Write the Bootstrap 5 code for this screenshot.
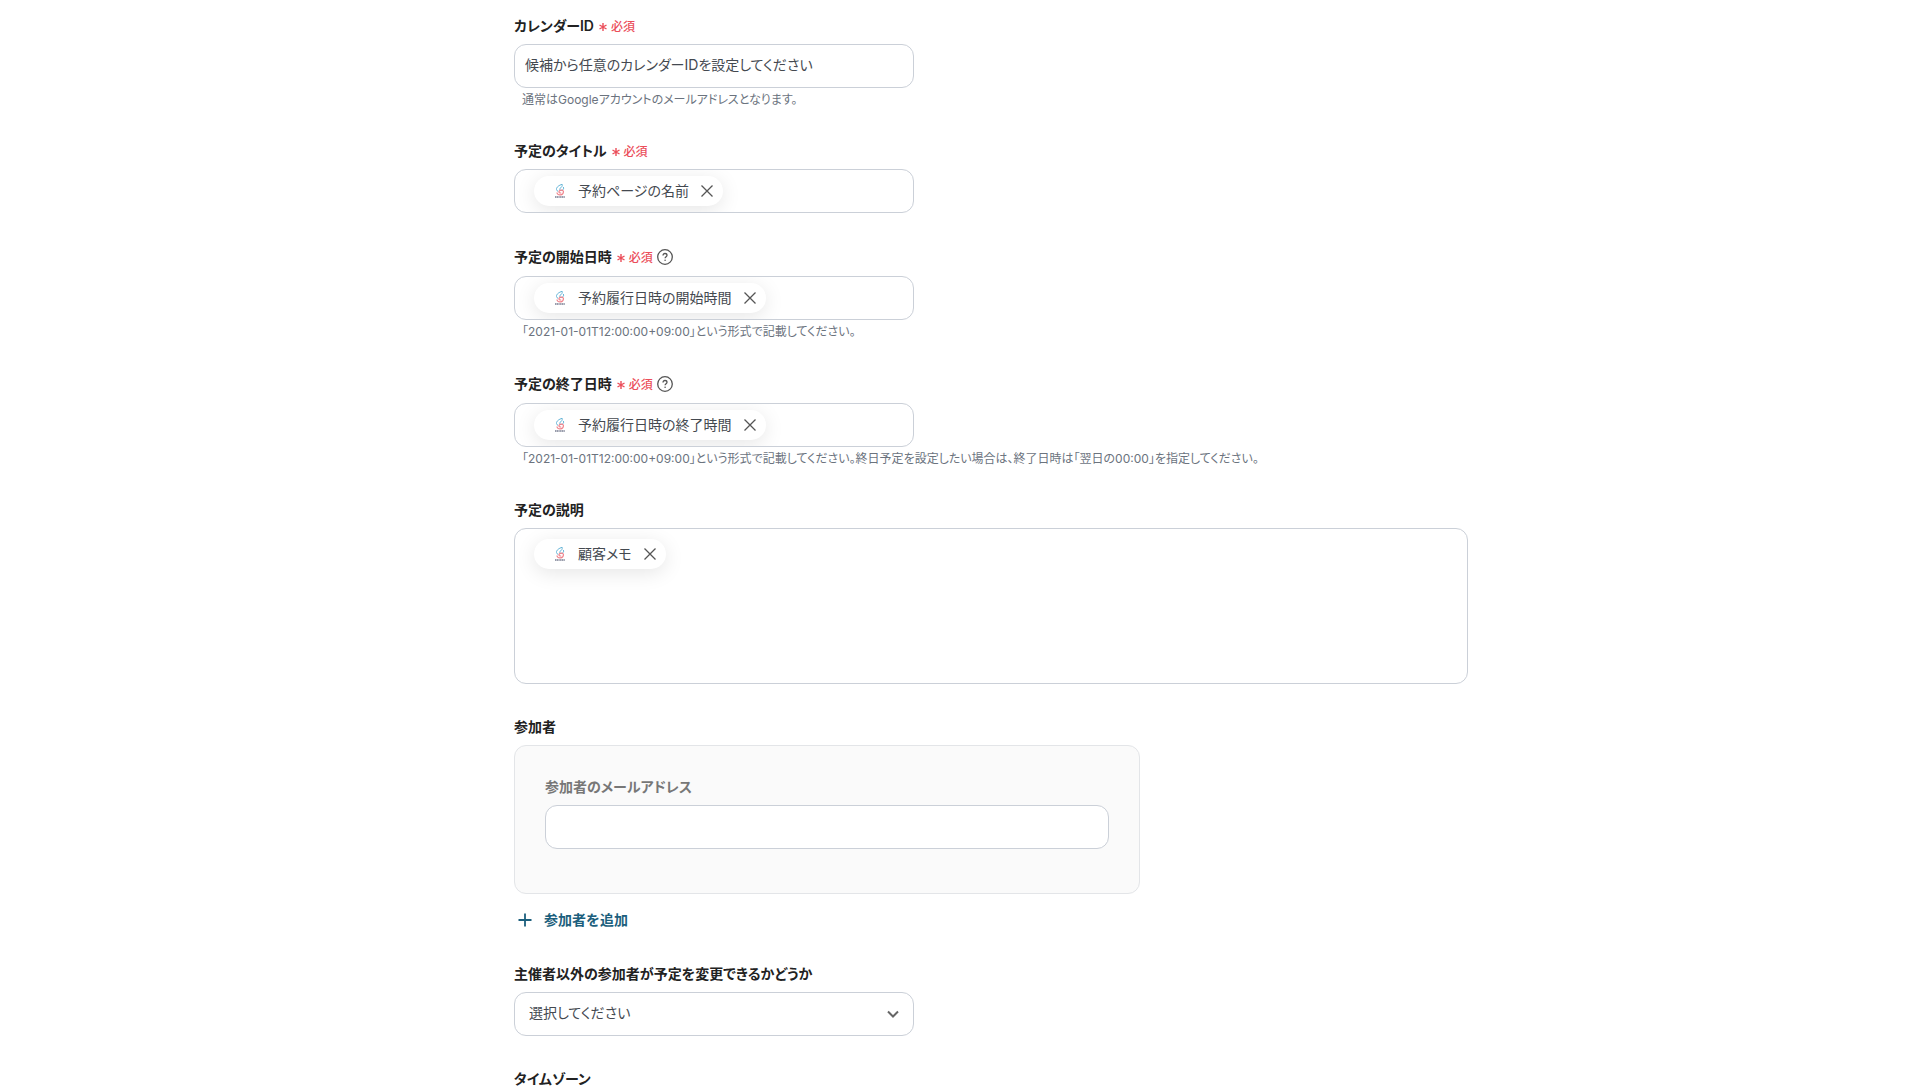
<!DOCTYPE html>
<html lang="ja">
<head>
<meta charset="utf-8">
<meta name="viewport" content="width=device-width, initial-scale=1">
<title>予定を作成</title>
<link href="https://cdn.jsdelivr.net/npm/bootstrap@5.3.0/dist/css/bootstrap.min.css" rel="stylesheet">
<style>
  body { font-family: Inter, "Noto Sans CJK JP", sans-serif; font-size: 14px; line-height: 24px; color: #222; background: #fff; font-feature-settings: "palt"; }
  .settings-form { max-width: 1016px; padding: 14px 0 0 62px; }
  .field-group { margin-bottom: 31px; }
  .field-label { font-weight: 600; margin-bottom: 6px; display: flex; align-items: center; }
  .field-label label, legend.field-label { font-size: 14px; line-height: 24px; }
  .with-help { min-height: 26px; }
  .required-mark { color: #eb4e5a; font-size: 12px; line-height: 22px; font-weight: 500; gap: 4px; margin-left: 5px; padding-top: 2px; }
  .help-btn { width: 16px; height: 16px; margin-left: 4px; color: #555; }
  .field-box { border: 1px solid #cbd0d8; border-radius: 12px; min-height: 44px; color: #444950; font-size: 14px; line-height: 24px; background-color: #fff; font-feature-settings: "palt"; }
  .field-medium { max-width: 400px; }
  input.field-box { padding: 8px 10px 10px; }
  select.field-box { padding: 8px 40px 10px 14px; background-image: url("data:image/svg+xml,%3Csvg xmlns='http://www.w3.org/2000/svg' viewBox='0 0 12 8'%3E%3Cpath d='M1 1.5l5 5 5-5' fill='none' stroke='%23666' stroke-width='2'/%3E%3C/svg%3E"); background-size: 12px 8px; background-position: right 14px center; }
  .chip-box { overflow: hidden; padding: 0 19px; }
  .memo-box { height: 156px; padding-top: 10px; }
  .chip { height: 30px; border-radius: 15px; background: #fff; box-shadow: 0 4px 20px rgba(0,0,0,.1); padding: 0 10px 0 21px; white-space: nowrap; }
  .chip-logo { width: 10px; height: 14px; margin-right: 13px; }
  .chip-close { width: 12px; height: 12px; margin-left: 12px; color: #555; }
  .chip-input { min-width: 0; outline: 0; resize: none; }
  .help-text { font-size: 12px; line-height: 16px; padding-top: 4px; padding-left: 8px; color: #6b737e; }
  .member-panel { max-width: 626px; border: 1px solid #e3e5e8; border-radius: 12px; background: #fafafa; padding: 29px 30px 44px; }
  .member-panel label { color: #777; font-weight: 600; margin-bottom: 6px; }
  .add-btn { margin-top: 14px; padding: 0 4px; font-size: 14px; line-height: 23px; font-weight: 600; color: #1c5f7d; gap: 12px; }
  .add-btn svg { width: 14px; height: 14px; }
</style>
</head>
<body>
<svg class="d-none" aria-hidden="true">
  <symbol id="asterisk" viewBox="0 0 8 8"><path d="M4 0v8M.5 2l7 4M7.500 2l-7 4" stroke="currentColor" stroke-width="1.400"/></symbol>
  <symbol id="question" viewBox="0 0 16 16"><g fill="none" stroke="currentColor" stroke-width="1.300"><circle cx="8" cy="8" r="7.300"/><path d="M6 6.600C6 5.200 6.900 4.500 8 4.500s2 .7 2 1.800c0 1.300-1.900 1.500-1.900 3"/></g><circle cx="8.100" cy="11.300" r=".8" fill="currentColor"/></symbol>
  <symbol id="cross" viewBox="0 0 12 12"><path d="M.5.5l11 11M11.500.5l-11 11" stroke="currentColor" stroke-width="1.300"/></symbol>
  <symbol id="brand" viewBox="0 0 10 14">
    <path d="M7.200.3C4 1.200 1.200 3.200 1.500 5.500c.1 1 .8 1.600 1.600 1.900M7.200.3C7.600 2.200 6.500 3.400 4.800 4.600M8.300 3c.7 1.400.2 2.500-.9 3.200-1.300.8-2.900.2-2.600-1.600" fill="none" stroke="#64b4d6" stroke-width="1"/>
    <path d="M2 8.500c0 1.600 1.500 2.600 3.300 2.400 2-.2 3.200-1.600 3.100-3.400C8.300 6.500 7.500 6 6.500 6.200 5 6.500 3.700 7 4 8.200c.2.900 1.500 1 2.200.5" fill="none" stroke="#f0828a" stroke-width="1.200"/>
    <path d="M0 13h10" stroke="#777c90" stroke-width="1.400" stroke-dasharray="1.300 .4"/>
  </symbol>
</svg>

<main class="settings-form mx-auto">
  <form>
    <div class="field-group">
      <div class="field-label">
        <label for="calendarId">カレンダーID</label>
        <span class="required-mark d-inline-flex align-items-center"><svg width="8" height="8"><use href="#asterisk"/></svg>必須</span>
      </div>
      <input id="calendarId" type="text" class="form-control field-box field-medium" value="候補から任意のカレンダーIDを設定してください">
      <div class="help-text">通常はGoogleアカウントのメールアドレスとなります。</div>
    </div>

    <div class="field-group">
      <div class="field-label">
        <label for="eventTitle">予定のタイトル</label>
        <span class="required-mark d-inline-flex align-items-center"><svg width="8" height="8"><use href="#asterisk"/></svg>必須</span>
      </div>
      <div class="field-box field-medium chip-box d-flex align-items-center">
        <span class="chip d-inline-flex align-items-center"><svg class="chip-logo"><use href="#brand"/></svg>予約ページの名前<button type="button" class="btn p-0 border-0 d-flex chip-close" aria-label="削除"><svg width="12" height="12"><use href="#cross"/></svg></button></span>
        <input id="eventTitle" type="text" class="chip-input flex-grow-1 border-0 bg-transparent p-0">
      </div>
    </div>

    <div class="field-group">
      <div class="field-label with-help">
        <label for="startAt">予定の開始日時</label>
        <span class="required-mark d-inline-flex align-items-center"><svg width="8" height="8"><use href="#asterisk"/></svg>必須</span>
        <button type="button" class="btn p-0 border-0 d-flex help-btn" aria-label="ヘルプ"><svg width="16" height="16"><use href="#question"/></svg></button>
      </div>
      <div class="field-box field-medium chip-box d-flex align-items-center">
        <span class="chip d-inline-flex align-items-center"><svg class="chip-logo"><use href="#brand"/></svg>予約履行日時の開始時間<button type="button" class="btn p-0 border-0 d-flex chip-close" aria-label="削除"><svg width="12" height="12"><use href="#cross"/></svg></button></span>
        <input id="startAt" type="text" class="chip-input flex-grow-1 border-0 bg-transparent p-0">
      </div>
      <div class="help-text">「2021-01-01T12:00:00+09:00」という形式で記載してください。</div>
    </div>

    <div class="field-group">
      <div class="field-label with-help">
        <label for="endAt">予定の終了日時</label>
        <span class="required-mark d-inline-flex align-items-center"><svg width="8" height="8"><use href="#asterisk"/></svg>必須</span>
        <button type="button" class="btn p-0 border-0 d-flex help-btn" aria-label="ヘルプ"><svg width="16" height="16"><use href="#question"/></svg></button>
      </div>
      <div class="field-box field-medium chip-box d-flex align-items-center">
        <span class="chip d-inline-flex align-items-center"><svg class="chip-logo"><use href="#brand"/></svg>予約履行日時の終了時間<button type="button" class="btn p-0 border-0 d-flex chip-close" aria-label="削除"><svg width="12" height="12"><use href="#cross"/></svg></button></span>
        <input id="endAt" type="text" class="chip-input flex-grow-1 border-0 bg-transparent p-0">
      </div>
      <div class="help-text">「2021-01-01T12:00:00+09:00」という形式で記載してください。終日予定を設定したい場合は、終了日時は「翌日の00:00」を指定してください。</div>
    </div>

    <div class="field-group">
      <div class="field-label"><label for="description">予定の説明</label></div>
      <div class="field-box chip-box memo-box d-flex align-items-start">
        <span class="chip d-inline-flex align-items-center"><svg class="chip-logo"><use href="#brand"/></svg>顧客メモ<button type="button" class="btn p-0 border-0 d-flex chip-close" aria-label="削除"><svg width="12" height="12"><use href="#cross"/></svg></button></span>
        <textarea id="description" class="chip-input flex-grow-1 align-self-stretch border-0 bg-transparent p-0"></textarea>
      </div>
    </div>

    <fieldset class="field-group">
      <legend class="field-label">参加者</legend>
      <div class="member-panel">
        <label for="memberMail" class="d-block">参加者のメールアドレス</label>
        <input id="memberMail" type="email" class="form-control field-box">
      </div>
      <button type="button" class="btn border-0 add-btn d-inline-flex align-items-center"><svg viewBox="0 0 14 14"><path d="M7 .5v13M.5 7h13" stroke="currentColor" stroke-width="1.800"/></svg>参加者を追加</button>
    </fieldset>

    <div class="field-group">
      <div class="field-label"><label for="guestEdit">主催者以外の参加者が予定を変更できるかどうか</label></div>
      <select id="guestEdit" class="form-select field-box field-medium"><option>選択してください</option></select>
    </div>

    <div class="field-group">
      <div class="field-label"><label for="timezone">タイムゾーン</label></div>
      <input id="timezone" type="text" class="form-control field-box field-medium">
    </div>
  </form>
</main>
<script src="https://cdn.jsdelivr.net/npm/bootstrap@5.3.0/dist/js/bootstrap.bundle.min.js"></script>
</body>
</html>
